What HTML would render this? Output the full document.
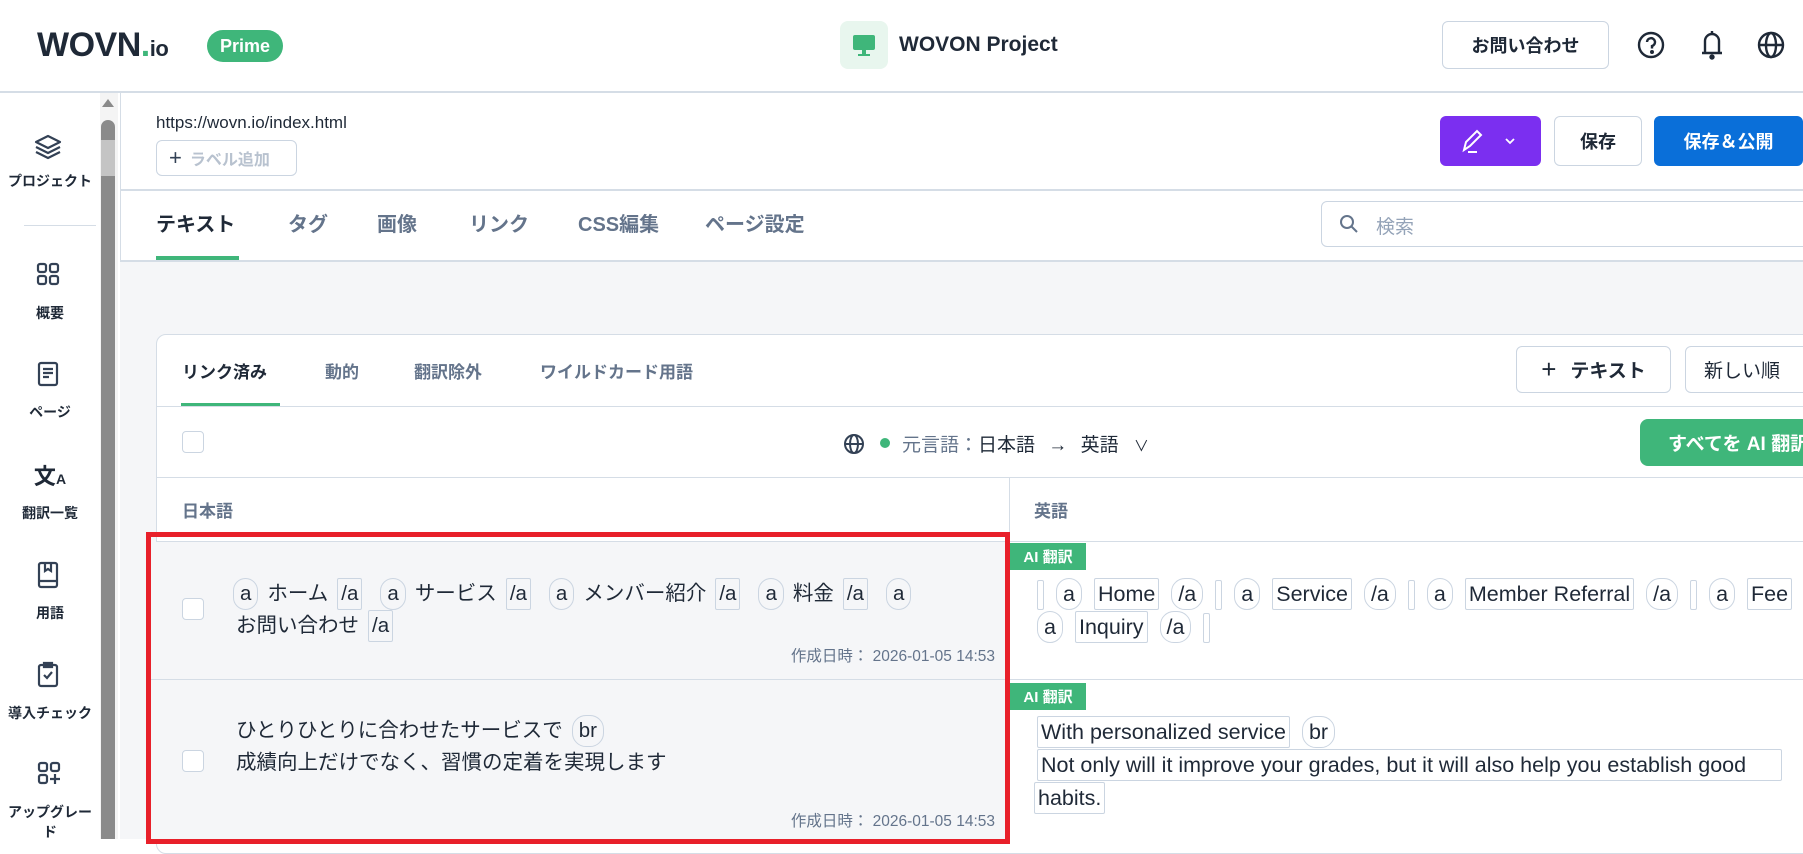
<!DOCTYPE html>
<html><head><meta charset="utf-8"><style>
*{box-sizing:border-box;margin:0;padding:0}
body{width:1803px;height:839px;overflow:hidden;background:#fff;font-family:"Liberation Sans","Noto Sans CJK JP",sans-serif;color:#1f2937;position:relative}
.a{position:absolute}
.btn{position:absolute;border:1px solid #cbd5e1;border-radius:6px;background:#fff;display:flex;align-items:center;justify-content:center;font-weight:700;font-size:18px}
.side{position:absolute;left:0;width:100px;text-align:center;font-size:14px;font-weight:700;color:#1f2937}
.tab{position:absolute;font-size:20px;font-weight:700;color:#64748b;top:208px}
.itab{position:absolute;font-size:17px;font-weight:700;color:#64748b;top:358px}
.chip{display:inline-block;border:1px solid #cbd5e1;border-radius:14px;padding:0 6px;line-height:30px;margin:0 6px}
.box{display:inline-block;border:1px solid #cbd5e1;border-radius:2px;padding:0 3px;line-height:30px;margin:0 6px}
.L .chip,.L .box{margin:0 9px}
.thin{display:inline-block;border:1px solid #cbd5e1;border-radius:2px;width:7px;height:30px;vertical-align:middle;margin:0 6px}
.cb{position:absolute;width:22px;height:22px;border:1px solid #cbd5e1;border-radius:4px;background:#fff}
.badge{position:absolute;left:1010px;width:76px;height:27px;background:#3fb67a;color:#fff;font-size:15px;font-weight:700;display:flex;align-items:center;justify-content:center}
.date{position:absolute;right:808px;font-size:15.5px;color:#64748b}
</style></head><body>
<div class="a" style="left:37px;top:26px;font-size:34px;font-weight:900;color:#1f2937;letter-spacing:-0.5px">WOVN<span style="color:#3fb67a">.</span><span style="font-size:22px">io</span></div>
<div class="a" style="left:207px;top:30px;width:76px;height:32px;background:#3fb67a;border-radius:16px;color:#fff;font-weight:700;font-size:18px;display:flex;align-items:center;justify-content:center">Prime</div>
<div class="a" style="left:840px;top:21px;width:48px;height:48px;background:#e8f6ee;border-radius:8px"></div>
<svg class="a" style="left:851px;top:32px" width="26" height="26" viewBox="0 0 26 26"><rect x="2" y="3" width="22" height="15" rx="2" fill="#3fb67a"/><rect x="11" y="18" width="4" height="4" fill="#3fb67a"/><rect x="7" y="22" width="12" height="2" fill="#3fb67a"/></svg>
<div class="a" style="left:899px;top:33px;font-size:21px;font-weight:600;color:#1f2937">WOVON Project</div>
<div class="btn" style="left:1442px;top:21px;width:167px;height:48px;font-size:18px">お問い合わせ</div>
<svg class="a" style="left:1636px;top:30px" width="30" height="30" viewBox="0 0 30 30" fill="none" stroke="#1f2937" stroke-width="2.4"><circle cx="15" cy="15" r="12"/><path d="M11 12a4 4 0 1 1 5 4v2.5"/><circle cx="16" cy="22" r=".8" fill="#1f2937"/></svg>
<svg class="a" style="left:1697px;top:28px" width="30" height="32" viewBox="0 0 30 32" fill="none" stroke="#1f2937" stroke-width="2.4"><path d="M8 25V13a7 7 0 0 1 14 0v12M5 25h20"/><circle cx="15" cy="29" r="1.5" fill="#1f2937"/><path d="M15 3v3"/></svg>
<svg class="a" style="left:1756px;top:30px" width="30" height="30" viewBox="0 0 30 30" fill="none" stroke="#1f2937" stroke-width="2.4"><circle cx="15" cy="15" r="12"/><ellipse cx="15" cy="15" rx="5" ry="12"/><path d="M3 15h24"/></svg>
<div class="a" style="left:0;top:91px;width:1803px;height:2px;background:#d5dde6"></div>
<div class="a" style="left:100px;top:93px;width:18px;height:746px;background:#f4f4f4"></div>
<div class="a" style="left:101px;top:120px;width:14px;height:719px;background:#8a8a8a;border-radius:7px 7px 0 0"></div>
<div class="a" style="left:101px;top:140px;width:14px;height:36px;background:#c4c4c4"></div>
<svg class="a" style="left:101px;top:98px" width="14" height="10"><path d="M7 1L13 9H1z" fill="#8a8a8a"/></svg>
<div class="a" style="left:120px;top:93px;width:1px;height:746px;background:#d5dde6"></div>
<svg class="a" style="left:34px;top:134px" width="28" height="26" viewBox="0 0 28 26" fill="none" stroke="#334155" stroke-width="2.2" stroke-linejoin="round"><path d="M14 2L26 8 14 14 2 8z"/><path d="M2 13l12 6 12-6M2 18l12 6 12-6"/></svg>
<div class="side" style="top:171px">プロジェクト</div>
<div class="a" style="left:24px;top:225px;width:72px;height:1px;background:#d5dde6"></div>
<svg class="a" style="left:36px;top:262px" width="24" height="24" viewBox="0 0 24 24" fill="none" stroke="#334155" stroke-width="2.2"><rect x="2" y="2" width="8" height="8" rx="2"/><rect x="14" y="2" width="8" height="8" rx="2"/><rect x="2" y="14" width="8" height="8" rx="2"/><rect x="14" y="14" width="8" height="8" rx="2"/></svg>
<div class="side" style="top:303px">概要</div>
<svg class="a" style="left:37px;top:361px" width="22" height="26" viewBox="0 0 22 26" fill="none" stroke="#334155" stroke-width="2.2"><rect x="2" y="2" width="18" height="22" rx="2"/><path d="M6 8h10M6 12h10M6 16h6"/></svg>
<div class="side" style="top:402px">ページ</div>
<div class="side" style="top:459px;font-size:22px;font-weight:700">文<span style="font-size:14px">A</span></div>
<div class="side" style="top:503px">翻訳一覧</div>
<svg class="a" style="left:37px;top:561px" width="22" height="28" viewBox="0 0 22 28" fill="none" stroke="#334155" stroke-width="2.2"><rect x="2" y="2" width="18" height="24" rx="2"/><path d="M2 20h18M8 2v8l3-2 3 2V2"/></svg>
<div class="side" style="top:603px">用語</div>
<svg class="a" style="left:37px;top:660px" width="22" height="28" viewBox="0 0 22 28" fill="none" stroke="#334155" stroke-width="2.2"><rect x="2" y="5" width="18" height="21" rx="2"/><path d="M7 3h8v4H7zM7 15l3 3 5-6"/></svg>
<div class="side" style="top:703px">導入チェック</div>
<svg class="a" style="left:37px;top:761px" width="24" height="24" viewBox="0 0 24 24" fill="none" stroke="#334155" stroke-width="2.2"><rect x="2" y="2" width="8" height="8" rx="2"/><rect x="14" y="2" width="8" height="8" rx="2"/><rect x="2" y="14" width="8" height="8" rx="2"/><path d="M18 13v10M13 18h10"/></svg>
<div class="side" style="top:802px">アップグレー<br>ド</div>
<div class="a" style="left:156px;top:113px;font-size:17px;color:#1f2937">https://wovn.io/index.html</div>
<div class="a" style="left:156px;top:140px;width:141px;height:36px;border:1px solid #cbd5e1;border-radius:6px;font-size:16px;font-weight:700;color:#b8c2cf;display:flex;align-items:center;padding-left:12px"><span style="color:#334155;font-size:22px;font-weight:400;margin-right:8px">+</span>ラベル追加</div>
<div class="a" style="left:1440px;top:116px;width:101px;height:50px;background:#7b2ff0;border-radius:6px"></div>
<svg class="a" style="left:1460px;top:128px" width="60" height="26" viewBox="0 0 60 26" fill="none" stroke="#fff" stroke-width="2"><path d="M4 22L6 14 17 3l4 4-11 11-6 4zM8 24h9"/><path d="M46 11l4 4 4-4" stroke-width="1.8"/></svg>
<div class="btn" style="left:1554px;top:116px;width:88px;height:50px">保存</div>
<div class="btn" style="left:1654px;top:116px;width:149px;height:50px;background:#0a6fd9;border-color:#0a6fd9;color:#fff">保存＆公開</div>
<div class="a" style="left:120px;top:189px;width:1683px;height:2px;background:#d5dde6"></div>
<div class="tab" style="left:156px;color:#1f2937">テキスト</div>
<div class="tab" style="left:288px">タグ</div>
<div class="tab" style="left:377px">画像</div>
<div class="tab" style="left:469px">リンク</div>
<div class="tab" style="left:578px">CSS編集</div>
<div class="tab" style="left:705px">ページ設定</div>
<div class="a" style="left:156px;top:256px;width:83px;height:4px;background:#3fb67a"></div>
<div class="a" style="left:1321px;top:201px;width:490px;height:46px;border:1px solid #cbd5e1;border-radius:6px"></div>
<svg class="a" style="left:1339px;top:214px" width="20" height="20" viewBox="0 0 20 20" fill="none" stroke="#64748b" stroke-width="2"><circle cx="8" cy="8" r="6"/><path d="M12.5 12.5L18 18"/></svg>
<div class="a" style="left:1376px;top:212px;font-size:19px;color:#94a3b8">検索</div>
<div class="a" style="left:120px;top:260px;width:1683px;height:579px;background:#f5f6f8;border-top:2px solid #d5dde6"></div>
<div class="a" style="left:156px;top:334px;width:1660px;height:520px;background:#fff;border:1px solid #d5dde6;border-radius:10px"></div>
<div class="itab" style="left:182px;color:#1f2937">リンク済み</div>
<div class="itab" style="left:325px">動的</div>
<div class="itab" style="left:414px">翻訳除外</div>
<div class="itab" style="left:540px">ワイルドカード用語</div>
<div class="a" style="left:181px;top:403px;width:99px;height:4px;background:#3fb67a"></div>
<div class="a" style="left:157px;top:406px;width:1646px;height:1px;background:#d5dde6"></div>
<div class="btn" style="left:1516px;top:346px;width:155px;height:47px;font-size:19px"><span style="font-size:26px;font-weight:400;margin-right:14px">+</span>テキスト</div>
<div class="btn" style="left:1685px;top:346px;width:130px;height:47px;font-size:19px;font-weight:400;justify-content:flex-start;padding-left:18px">新しい順</div>
<div class="cb" style="left:182px;top:431px"></div>
<svg class="a" style="left:843px;top:433px" width="22" height="22" viewBox="0 0 22 22" fill="none" stroke="#334155" stroke-width="2"><circle cx="11" cy="11" r="9"/><ellipse cx="11" cy="11" rx="4" ry="9"/><path d="M2 11h18"/></svg>
<div class="a" style="left:880px;top:438px;width:10px;height:10px;border-radius:50%;background:#3fb67a"></div>
<div class="a" style="left:902px;top:430px;font-size:19px;color:#1f2937"><span style="color:#64748b">元言語：</span>日本語 <span style="margin:0 8px">→</span> 英語 <span style="margin-left:10px;font-size:15px">∨</span></div>
<div class="a" style="left:1640px;top:419px;width:180px;height:47px;background:#3fb67a;border-radius:8px;color:#fff;font-weight:700;font-size:19px;display:flex;align-items:center;padding-left:28px;white-space:nowrap">すべてを AI 翻訳</div>
<div class="a" style="left:157px;top:477px;width:1646px;height:1px;background:#d5dde6"></div>
<div class="a" style="left:182px;top:497px;font-size:17px;font-weight:700;color:#64748b">日本語</div>
<div class="a" style="left:1034px;top:497px;font-size:17px;font-weight:700;color:#64748b">英語</div>
<div class="a" style="left:1009px;top:478px;width:1px;height:361px;background:#d5dde6"></div>
<div class="a" style="left:157px;top:541px;width:1646px;height:1px;background:#d5dde6"></div>
<div class="a" style="left:150px;top:542px;width:859px;height:297px;background:#f5f6f8"></div>
<div class="a" style="left:150px;top:679px;width:1653px;height:1px;background:#d5dde6"></div>
<div class="cb" style="left:182px;top:598px"></div>
<div class="a L" style="left:224px;top:578px;width:785px;font-size:20.5px;line-height:32px;color:#1f2937;white-space:nowrap"><span class="chip">a</span>ホーム<span class="box">/a</span><span class="chip">a</span>サービス<span class="box">/a</span><span class="chip">a</span>メンバー紹介<span class="box">/a</span><span class="chip">a</span>料金<span class="box">/a</span><span class="chip">a</span><br><span style="margin-left:12px">お問い合わせ</span><span class="box">/a</span></div>
<div class="date" style="top:644px">作成日時： 2026-01-05 14:53</div>
<div class="cb" style="left:182px;top:750px"></div>
<div class="a L" style="left:236px;top:715px;font-size:20.5px;line-height:32px;color:#1f2937">ひとりひとりに合わせたサービスで<span class="chip">br</span><br>成績向上だけでなく、習慣の定着を実現します</div>
<div class="date" style="top:809px">作成日時： 2026-01-05 14:53</div>
<div class="badge" style="top:543px">AI 翻訳</div>
<div class="a" style="left:1034px;top:578px;width:780px;font-size:21.5px;line-height:33px;color:#1f2937;white-space:nowrap"><span class="thin" style="margin-left:3px"></span><span class="chip">a</span><span class="box">Home</span><span class="chip">/a</span><span class="thin"></span><span class="chip">a</span><span class="box">Service</span><span class="chip">/a</span><span class="thin"></span><span class="chip">a</span><span class="box">Member Referral</span><span class="chip">/a</span><span class="thin"></span><span class="chip">a</span><span class="box">Fee</span><span class="chip">/a</span><br><span class="chip" style="margin-left:3px">a</span><span class="box">Inquiry</span><span class="chip">/a</span><span class="thin"></span></div>
<div class="badge" style="top:683px">AI 翻訳</div>
<div class="a" style="left:1034px;top:716px;width:770px;font-size:21.5px;line-height:33px;color:#1f2937;white-space:nowrap"><span class="box" style="margin-left:3px">With personalized service</span><span class="chip">br</span><br><span class="box" style="width:745px;margin-left:3px;overflow:hidden;vertical-align:top">Not only will it improve your grades, but it will also help you establish good</span><br><span class="box" style="margin-left:0">habits.</span></div>
<div class="a" style="left:146px;top:532px;width:864px;height:312px;border:5px solid #e8202a"></div>
</body></html>
